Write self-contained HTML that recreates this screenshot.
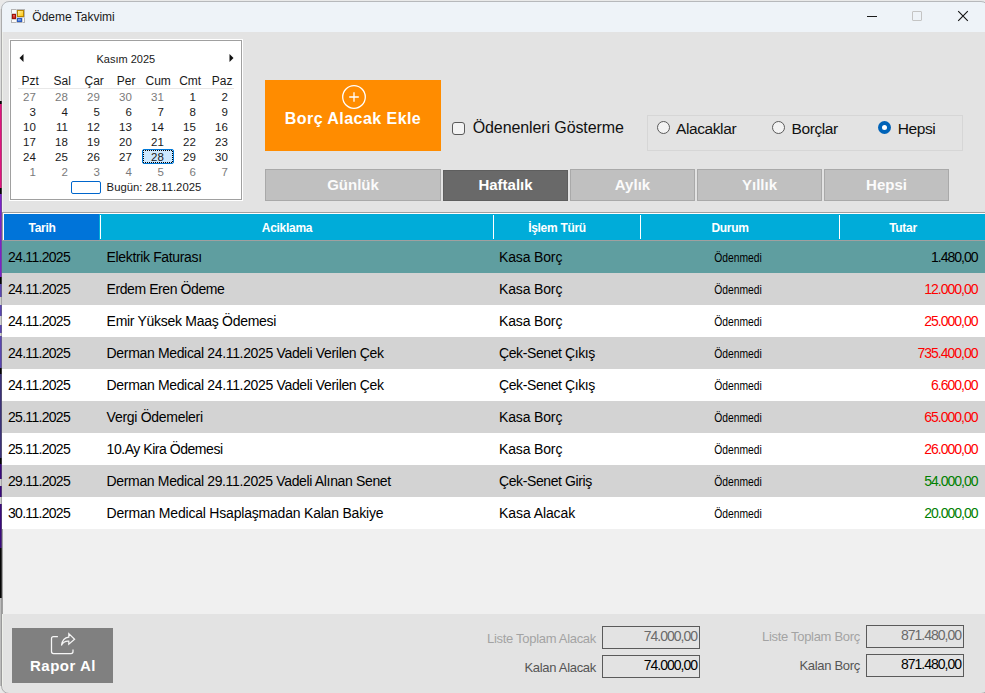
<!DOCTYPE html>
<html><head><meta charset="utf-8">
<style>
*{box-sizing:border-box;margin:0;padding:0}
html,body{width:985px;height:693px;overflow:hidden;background:#e6e6e6}
body{position:relative;font-family:"Liberation Sans",sans-serif;color:#000}
.a{position:absolute}
.t{position:absolute;white-space:nowrap;line-height:1}
#desk div{position:absolute;left:0;width:2px}
#win{position:absolute;left:1px;top:1px;width:988px;height:694px;border-radius:8px;background:#e3e3e3;overflow:hidden}
#title{position:absolute;left:0;top:0;width:100%;height:31px;background:#eef3f8}
.cal{font-size:11px}
.dn{position:absolute;width:32px;text-align:center;line-height:1;font-size:11px}
.dd{position:absolute;width:32px;text-align:right;line-height:1;font-size:11.5px}
.g{color:#7a7a7a}
.btn{position:absolute;top:169px;height:32px;background:#c0c0c0;border:1px solid #a9a9a9;color:#fbfbfb;font-weight:bold;font-size:15px;text-align:center;line-height:1}
.hd{position:absolute;top:213px;height:27px;background:#00acd9;border-left:1px solid #fff;border-top:1px solid #fff}
.ht{position:absolute;top:221.6px;color:#fff;font-weight:bold;font-size:12px;line-height:1;text-align:center;letter-spacing:-0.3px}
.row{position:absolute;left:2px;width:983px;height:32px}
.c{position:absolute;white-space:nowrap;line-height:1;font-size:14px}
.d1{left:8px;letter-spacing:-0.7px}
.d2{left:106.6px;letter-spacing:-0.4px}
.d3{left:499px;letter-spacing:-0.4px}
.d4{left:690px;width:96px;text-align:center;font-size:12px;transform:scaleX(0.86);transform-origin:center}
.d5{right:7.5px;text-align:right;letter-spacing:-1px}
.red{color:#f00}.grn{color:#008000}
</style></head><body>
<div id="win">
  <div id="title"></div>
</div>
<!-- title bar content (page coords) -->
<svg class="a" style="left:11px;top:9px" width="14" height="14" viewBox="0 0 14 14">
  <defs>
    <linearGradient id="gy" x1="0" y1="0" x2="1" y2="1"><stop offset="0" stop-color="#fff3b0"/><stop offset="1" stop-color="#ffc400"/></linearGradient>
    <linearGradient id="gr" x1="0" y1="0" x2="0" y2="1"><stop offset="0" stop-color="#f07070"/><stop offset="1" stop-color="#c01810"/></linearGradient>
    <linearGradient id="gb" x1="0" y1="0" x2="1" y2="1"><stop offset="0" stop-color="#a8c8ff"/><stop offset="1" stop-color="#2f66d0"/></linearGradient>
  </defs>
  <rect x="0.5" y="0.5" width="13" height="13" fill="#fbfbfb" stroke="#b4b4b4"/>
  <path d="M5.5 0V14M0 4.5H5.5M0 10.5H5.5M5.5 8.5H14M11.5 8.5V14" stroke="#cfcfcf" stroke-width="1"/>
  <rect x="6.5" y="1.5" width="6" height="6" fill="url(#gy)" stroke="#b88400"/>
  <rect x="1.5" y="5.5" width="3" height="4" fill="url(#gr)" stroke="#a01008"/>
  <rect x="6.5" y="9.5" width="4" height="3" fill="url(#gb)" stroke="#2a5ac0"/>
</svg>
<div class="t" style="left:32.3px;top:10.9px;font-size:12px;color:#1a1a1a">Ödeme Takvimi</div>
<div class="a" style="left:867px;top:16px;width:10px;height:1px;background:#1a1a1a"></div>
<div class="a" style="left:912px;top:11px;width:10px;height:10px;border:1px solid #c4c4c4;border-radius:1px"></div>
<svg class="a" style="left:957px;top:10px" width="12" height="12" viewBox="0 0 12 12"><path d="M1.2 1.2L10.8 10.8M10.8 1.2L1.2 10.8" stroke="#111" stroke-width="1.1"/></svg>

<!-- calendar -->
<div class="a" style="left:9px;top:39px;width:234px;height:162px;background:#fff;border:1px solid #fff"></div>
<div class="a" style="left:10px;top:40px;width:232px;height:160px;background:#fff;border:1px solid #a0a0a0"></div>
<svg class="a" style="left:19px;top:54px" width="5" height="8" viewBox="0 0 5 8"><path d="M4.5 0L0.5 4L4.5 8Z" fill="#111"/></svg>
<svg class="a" style="left:229px;top:54px" width="5" height="8" viewBox="0 0 5 8"><path d="M0.5 0L4.5 4L0.5 8Z" fill="#111"/></svg>
<div class="t cal" style="left:96.5px;top:53.7px;color:#1a1a1a">Kasım 2025</div>
<div class="a" style="left:18px;top:88px;width:216px;height:1px;background:#e8e8e8"></div>
<div class="a" style="left:142px;top:149px;width:32px;height:15px;background:#cce8ff;border:1px solid #0078d7;border-radius:2px"></div>
<svg class="a" style="left:143px;top:150px" width="30" height="13" viewBox="0 0 30 13"><rect x="0.5" y="0.5" width="29" height="12" fill="none" stroke="#000" stroke-dasharray="1 1" stroke-dashoffset="0.5" shape-rendering="crispEdges"/></svg>
<div class="dn" style="left:14.2px;top:74.9px;font-size:12px;color:#1a1a1a">Pzt</div>
<div class="dn" style="left:46.2px;top:74.9px;font-size:12px;color:#1a1a1a">Sal</div>
<div class="dn" style="left:78.2px;top:74.9px;font-size:12px;color:#1a1a1a">Çar</div>
<div class="dn" style="left:110.2px;top:74.9px;font-size:12px;color:#1a1a1a">Per</div>
<div class="dn" style="left:142.2px;top:74.9px;font-size:12px;color:#1a1a1a">Cum</div>
<div class="dn" style="left:174.2px;top:74.9px;font-size:12px;color:#1a1a1a">Cmt</div>
<div class="dn" style="left:206.2px;top:74.9px;font-size:12px;color:#1a1a1a">Paz</div>
<div class="dd g" style="left:3.9px;top:91.9px;">27</div>
<div class="dd g" style="left:35.9px;top:91.9px;">28</div>
<div class="dd g" style="left:67.9px;top:91.9px;">29</div>
<div class="dd g" style="left:99.9px;top:91.9px;">30</div>
<div class="dd g" style="left:131.9px;top:91.9px;">31</div>
<div class="dd" style="left:163.9px;top:91.9px;color:#1a1a1a">1</div>
<div class="dd" style="left:195.9px;top:91.9px;color:#1a1a1a">2</div>
<div class="dd" style="left:3.9px;top:106.9px;color:#1a1a1a">3</div>
<div class="dd" style="left:35.9px;top:106.9px;color:#1a1a1a">4</div>
<div class="dd" style="left:67.9px;top:106.9px;color:#1a1a1a">5</div>
<div class="dd" style="left:99.9px;top:106.9px;color:#1a1a1a">6</div>
<div class="dd" style="left:131.9px;top:106.9px;color:#1a1a1a">7</div>
<div class="dd" style="left:163.9px;top:106.9px;color:#1a1a1a">8</div>
<div class="dd" style="left:195.9px;top:106.9px;color:#1a1a1a">9</div>
<div class="dd" style="left:3.9px;top:121.9px;color:#1a1a1a">10</div>
<div class="dd" style="left:35.9px;top:121.9px;color:#1a1a1a">11</div>
<div class="dd" style="left:67.9px;top:121.9px;color:#1a1a1a">12</div>
<div class="dd" style="left:99.9px;top:121.9px;color:#1a1a1a">13</div>
<div class="dd" style="left:131.9px;top:121.9px;color:#1a1a1a">14</div>
<div class="dd" style="left:163.9px;top:121.9px;color:#1a1a1a">15</div>
<div class="dd" style="left:195.9px;top:121.9px;color:#1a1a1a">16</div>
<div class="dd" style="left:3.9px;top:136.9px;color:#1a1a1a">17</div>
<div class="dd" style="left:35.9px;top:136.9px;color:#1a1a1a">18</div>
<div class="dd" style="left:67.9px;top:136.9px;color:#1a1a1a">19</div>
<div class="dd" style="left:99.9px;top:136.9px;color:#1a1a1a">20</div>
<div class="dd" style="left:131.9px;top:136.9px;color:#1a1a1a">21</div>
<div class="dd" style="left:163.9px;top:136.9px;color:#1a1a1a">22</div>
<div class="dd" style="left:195.9px;top:136.9px;color:#1a1a1a">23</div>
<div class="dd" style="left:3.9px;top:151.9px;color:#1a1a1a">24</div>
<div class="dd" style="left:35.9px;top:151.9px;color:#1a1a1a">25</div>
<div class="dd" style="left:67.9px;top:151.9px;color:#1a1a1a">26</div>
<div class="dd" style="left:99.9px;top:151.9px;color:#1a1a1a">27</div>
<div class="dd" style="left:131.9px;top:151.9px;color:#1a1a1a">28</div>
<div class="dd" style="left:163.9px;top:151.9px;color:#1a1a1a">29</div>
<div class="dd" style="left:195.9px;top:151.9px;color:#1a1a1a">30</div>
<div class="dd g" style="left:3.9px;top:166.9px;">1</div>
<div class="dd g" style="left:35.9px;top:166.9px;">2</div>
<div class="dd g" style="left:67.9px;top:166.9px;">3</div>
<div class="dd g" style="left:99.9px;top:166.9px;">4</div>
<div class="dd g" style="left:131.9px;top:166.9px;">5</div>
<div class="dd g" style="left:163.9px;top:166.9px;">6</div>
<div class="dd g" style="left:195.9px;top:166.9px;">7</div>
<div class="a" style="left:71px;top:181px;width:30px;height:13px;border:1px solid #0066cc;border-radius:2px"></div>
<div class="t cal" style="left:106.6px;top:181.8px;font-size:11.3px;color:#1a1a1a">Bugün: 28.11.2025</div>

<!-- orange button -->
<div class="a" style="left:265px;top:80px;width:176px;height:71px;background:#ff8c00"></div>
<svg class="a" style="left:341px;top:84px" width="26" height="26" viewBox="0 0 26 26"><circle cx="13" cy="13" r="11.3" fill="none" stroke="#fff" stroke-width="1.3"/><path d="M13 8.2V17.8M8.2 13H17.8" stroke="#fff" stroke-width="1.3"/></svg>
<div class="t" style="left:265px;width:176px;text-align:center;top:111.2px;font-size:16px;font-weight:bold;color:#fff;letter-spacing:0.45px">Borç Alacak Ekle</div>

<!-- checkbox -->
<div class="a" style="left:452px;top:122px;width:13px;height:13px;border:1px solid #5a5a5a;border-radius:3px;background:#f3f3f3"></div>
<div class="t" style="left:472.7px;top:120.4px;font-size:16px;letter-spacing:-0.1px;color:#111">Ödenenleri Gösterme</div>

<!-- radio group -->
<div class="a" style="left:647px;top:115px;width:316px;height:36px;border:1px solid #d6d6d6"></div>
<div class="a" style="left:657px;top:121px;width:13px;height:13px;border:1px solid #5a5a5a;border-radius:50%;background:#f3f3f3"></div>
<div class="t" style="left:676px;top:120.7px;font-size:15.5px;letter-spacing:-0.4px;color:#111">Alacaklar</div>
<div class="a" style="left:772px;top:121px;width:13px;height:13px;border:1px solid #5a5a5a;border-radius:50%;background:#f3f3f3"></div>
<div class="t" style="left:791.5px;top:120.7px;font-size:15.5px;letter-spacing:-0.4px;color:#111">Borçlar</div>
<div class="a" style="left:878px;top:121px;width:13px;height:13px;border-radius:50%;background:#0063b8"></div>
<div class="a" style="left:882px;top:125px;width:5px;height:5px;border-radius:50%;background:#fff"></div>
<div class="t" style="left:897.7px;top:120.7px;font-size:15.5px;letter-spacing:-0.4px;color:#111">Hepsi</div>

<!-- period buttons -->
<div class="btn" style="left:265px;width:176px"><span class="t" style="position:absolute;left:0;right:0;top:7.2px">Günlük</span></div>
<div class="btn" style="left:443px;top:170px;height:31px;width:125px;background:#696969;border-color:#5e5e5e;color:#fff"><span class="t" style="position:absolute;left:0;right:0;top:6.2px">Haftalık</span></div>
<div class="btn" style="left:570px;width:125px"><span class="t" style="position:absolute;left:0;right:0;top:7.2px">Aylık</span></div>
<div class="btn" style="left:697px;width:125px"><span class="t" style="position:absolute;left:0;right:0;top:7.2px">Yıllık</span></div>
<div class="btn" style="left:824px;width:125px"><span class="t" style="position:absolute;left:0;right:0;top:7.2px">Hepsi</span></div>

<!-- grid -->
<div class="a" style="left:2px;top:212px;width:983px;height:402px;background:#f0f0f0;border-top:1px solid #a0a0a0;border-left:1px solid #a0a0a0"></div>
<div class="a" style="left:3px;top:213px;width:982px;height:27px;background:#00acd9;border-top:1px solid #fff;border-left:1px solid #fff"></div>
<div class="a" style="left:4px;top:214px;width:95px;height:26px;background:#0074d9"></div>
<div class="a" style="left:100px;top:215px;width:1px;height:24px;background:#fff"></div>
<div class="a" style="left:493px;top:215px;width:1px;height:24px;background:#fff"></div>
<div class="a" style="left:640px;top:215px;width:1px;height:24px;background:#fff"></div>
<div class="a" style="left:839px;top:215px;width:1px;height:24px;background:#fff"></div>
<div class="a" style="left:3px;top:240px;width:982px;height:1px;background:#a0a0a0"></div>
<div class="ht" style="left:3px;width:78px">Tarih</div>
<div class="ht" style="left:101px;width:372px">Aciklama</div>
<div class="ht" style="left:494px;width:126px">İşlem Türü</div>
<div class="ht" style="left:641px;width:178px">Durum</div>
<div class="ht" style="left:840px;width:126px">Tutar</div>
<div class="row" style="top:241px;background:#5f9ea0"></div>
<div class="c d1" style="top:249.8px">24.11.2025</div>
<div class="c d2" style="top:249.8px;letter-spacing:-0.356px">Elektrik Faturası</div>
<div class="c d3" style="top:249.8px;letter-spacing:-0.15px">Kasa Borç</div>
<div class="c d4" style="top:251.9px">Ödenmedi</div>
<div class="c d5" style="top:249.8px">1.480,00</div>
<div class="row" style="top:273px;background:#d3d3d3"></div>
<div class="c d1" style="top:281.8px">24.11.2025</div>
<div class="c d2" style="top:281.8px;letter-spacing:-0.420px">Erdem Eren Ödeme</div>
<div class="c d3" style="top:281.8px;letter-spacing:-0.15px">Kasa Borç</div>
<div class="c d4" style="top:283.9px">Ödenmedi</div>
<div class="c d5 red" style="top:281.8px">12.000,00</div>
<div class="row" style="top:305px;background:#fff"></div>
<div class="c d1" style="top:313.8px">24.11.2025</div>
<div class="c d2" style="top:313.8px;letter-spacing:-0.287px">Emir Yüksek Maaş Ödemesi</div>
<div class="c d3" style="top:313.8px;letter-spacing:-0.15px">Kasa Borç</div>
<div class="c d4" style="top:315.9px">Ödenmedi</div>
<div class="c d5 red" style="top:313.8px">25.000,00</div>
<div class="row" style="top:337px;background:#d3d3d3"></div>
<div class="c d1" style="top:345.8px">24.11.2025</div>
<div class="c d2" style="top:345.8px;letter-spacing:-0.340px">Derman Medical 24.11.2025 Vadeli Verilen Çek</div>
<div class="c d3" style="top:345.8px;letter-spacing:-0.4px">Çek-Senet Çıkış</div>
<div class="c d4" style="top:347.9px">Ödenmedi</div>
<div class="c d5 red" style="top:345.8px">735.400,00</div>
<div class="row" style="top:369px;background:#fff"></div>
<div class="c d1" style="top:377.8px">24.11.2025</div>
<div class="c d2" style="top:377.8px;letter-spacing:-0.340px">Derman Medical 24.11.2025 Vadeli Verilen Çek</div>
<div class="c d3" style="top:377.8px;letter-spacing:-0.4px">Çek-Senet Çıkış</div>
<div class="c d4" style="top:379.9px">Ödenmedi</div>
<div class="c d5 red" style="top:377.8px">6.600,00</div>
<div class="row" style="top:401px;background:#d3d3d3"></div>
<div class="c d1" style="top:409.8px">25.11.2025</div>
<div class="c d2" style="top:409.8px;letter-spacing:-0.279px">Vergi Ödemeleri</div>
<div class="c d3" style="top:409.8px;letter-spacing:-0.15px">Kasa Borç</div>
<div class="c d4" style="top:411.9px">Ödenmedi</div>
<div class="c d5 red" style="top:409.8px">65.000,00</div>
<div class="row" style="top:433px;background:#fff"></div>
<div class="c d1" style="top:441.8px">25.11.2025</div>
<div class="c d2" style="top:441.8px;letter-spacing:-0.459px">10.Ay Kira Ödemesi</div>
<div class="c d3" style="top:441.8px;letter-spacing:-0.15px">Kasa Borç</div>
<div class="c d4" style="top:443.9px">Ödenmedi</div>
<div class="c d5 red" style="top:441.8px">26.000,00</div>
<div class="row" style="top:465px;background:#d3d3d3"></div>
<div class="c d1" style="top:473.8px">29.11.2025</div>
<div class="c d2" style="top:473.8px;letter-spacing:-0.348px">Derman Medical 29.11.2025 Vadeli Alınan Senet</div>
<div class="c d3" style="top:473.8px;letter-spacing:-0.4px">Çek-Senet Giriş</div>
<div class="c d4" style="top:475.9px">Ödenmedi</div>
<div class="c d5 grn" style="top:473.8px">54.000,00</div>
<div class="row" style="top:497px;background:#fff"></div>
<div class="c d1" style="top:505.8px">30.11.2025</div>
<div class="c d2" style="top:505.8px;letter-spacing:-0.203px">Derman Medical Hsaplaşmadan Kalan Bakiye</div>
<div class="c d3" style="top:505.8px;letter-spacing:-0.08px">Kasa Alacak</div>
<div class="c d4" style="top:507.9px">Ödenmedi</div>
<div class="c d5 grn" style="top:505.8px">20.000,00</div>

<!-- bottom panel -->
<div class="a" style="left:2px;top:614px;width:983px;height:79px;background:#e3e3e3"></div>
<div class="a" style="left:12px;top:628px;width:101px;height:55px;background:#808080"></div>
<svg class="a" style="left:48px;top:632px" width="30" height="24" viewBox="0 0 30 24">
  <path d="M9.9 4.5H5.5Q3.5 4.5 3.5 6.5V19.5Q3.5 21.5 5.5 21.5H23Q25 21.5 25 19.5V17.5" fill="none" stroke="#f6f6f6" stroke-width="1.25"/>
  <path d="M13.4 13.6Q14.5 5.8 20.8 5.2V1.6L26.6 7.3L20.8 12.2V9.2Q15.5 8.8 13.4 13.6Z" fill="none" stroke="#f6f6f6" stroke-width="1.2" stroke-linejoin="miter"/>
</svg>
<div class="t" style="left:12.5px;width:101px;text-align:center;top:658.3px;font-size:15px;font-weight:bold;color:#fff;letter-spacing:0.5px">Rapor Al</div>

<div class="t" style="right:389px;top:632.4px;font-size:13px;color:#a3a3a3;letter-spacing:-0.3px">Liste Toplam Alacak</div>
<div class="t" style="right:389px;top:660.9px;font-size:13px;color:#555;letter-spacing:-0.3px">Kalan Alacak</div>
<div class="a" style="left:602px;top:626px;width:98px;height:23px;border:1px solid #5a5a5a"></div>
<div class="t" style="right:288px;top:628.5px;font-size:14px;color:#6a6a6a;letter-spacing:-1px">74.000,00</div>
<div class="a" style="left:602px;top:655px;width:98px;height:23px;border:1px solid #5a5a5a"></div>
<div class="t" style="right:288px;top:657.5px;font-size:14px;color:#000;letter-spacing:-1px">74.000,00</div>

<div class="t" style="right:125px;top:629.5px;font-size:13px;color:#a3a3a3;letter-spacing:-0.3px">Liste Toplam Borç</div>
<div class="t" style="right:125px;top:659.2px;font-size:13px;color:#555;letter-spacing:-0.3px">Kalan Borç</div>
<div class="a" style="left:866px;top:625px;width:98px;height:23px;border:1px solid #5a5a5a"></div>
<div class="t" style="right:24px;top:627.5px;font-size:14px;color:#6a6a6a;letter-spacing:-1px">871.480,00</div>
<div class="a" style="left:866px;top:654px;width:98px;height:23px;border:1px solid #5a5a5a"></div>
<div class="t" style="right:24px;top:656.5px;font-size:14px;color:#000;letter-spacing:-1px">871.480,00</div>

<div class="a" style="left:2px;top:32px;width:1px;height:180px;background:#eef0ea"></div>
<div class="a" style="left:2px;top:614px;width:1px;height:72px;background:#eef0ea"></div>
<svg class="a" style="left:0;top:0" width="985" height="693" viewBox="0 0 985 693">
  <path fill-rule="evenodd" fill="#e9e9e9" d="M0 0H985V693H0Z M9 1H981Q989 1 989 9V686Q989 694 981 694H9Q1 694 1 686V9Q1 1 9 1Z"/>
</svg>
<div id="desk">
  <div style="top:9px;height:92px;background:#dcdcdc"></div>
  <div style="top:101px;height:3px;background:#050505"></div>
  <div style="top:104px;height:84px;background:#e0147e"></div>
  <div style="top:188px;height:6px;background:#050505"></div>
  <div style="top:194px;height:83px;background:#7a22c8"></div>
  <div style="top:277px;height:7px;background:#050505"></div>
  <div style="top:284px;height:13px;background:#5a46b0"></div>
  <div style="top:297px;height:8px;background:#cfcfcf"></div>
  <div style="top:305px;height:11px;background:#5a46b0"></div>
  <div style="top:316px;height:9px;background:#cfcfcf"></div>
  <div style="top:325px;height:8px;background:#5a46b0"></div>
  <div style="top:333px;height:3px;background:#cfcfcf"></div>
  <div style="top:336px;height:32px;background:#5a46b0"></div>
  <div style="top:368px;height:6px;background:#050505"></div>
  <div style="top:374px;height:84px;background:#3c3278"></div>
  <div style="top:458px;height:6px;background:#050505"></div>
  <div style="top:464px;height:15px;background:#3a0a7a"></div>
  <div style="top:479px;height:7px;background:#cfcfcf"></div>
  <div style="top:486px;height:11px;background:#3a0a7a"></div>
  <div style="top:497px;height:7px;background:#cfcfcf"></div>
  <div style="top:504px;height:44px;background:#3a0a7a"></div>
  <div style="top:548px;height:50px;background:#050505"></div>
  <div style="top:598px;height:88px;background:#bcbcbc"></div>
</div>

<svg class="a" style="left:0;top:0" width="985" height="693" viewBox="0 0 985 693">
  <rect x="1.5" y="1.5" width="987" height="692" rx="7.5" fill="none" stroke="#707070" stroke-opacity="0.45"/>
</svg>
</body></html>
